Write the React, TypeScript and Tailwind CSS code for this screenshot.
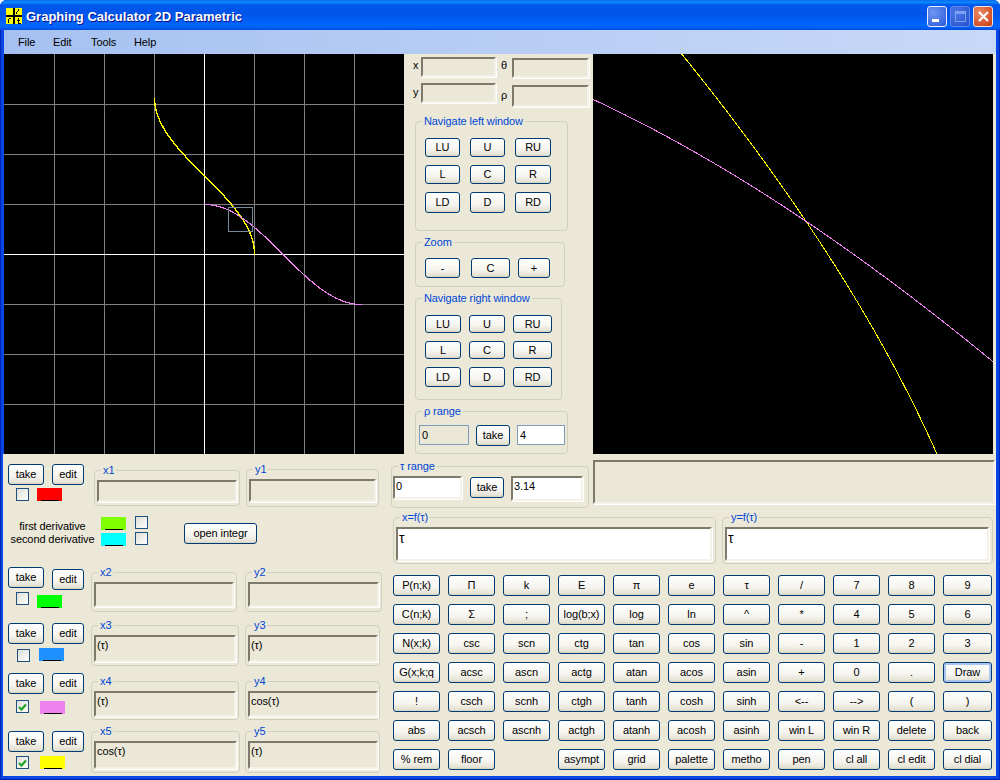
import React from 'react';

interface BoxProps {
  className?: string;
  children?: React.ReactNode;
}

interface GroupProps extends BoxProps {
  label: string;
}

interface SwatchProps {
  className: string;
}

const range = (from: number, to: number, n: number) =>
  Array.from({ length: n + 1 }, (_, i) => from + ((to - from) * i) / n);

// x = cos(t), y = t  and  x = t, y = cos(t), t from 0 to 3.14
const curve = (fx: (t: number) => number, fy: (t: number) => number, sx: number, ox: number, oy: number) =>
  range(0, 3.14, 1200)
    .map((t) => `${(ox + sx * fx(t)).toFixed(2)},${(oy - sx * fy(t)).toFixed(2)}`)
    .join(' ');

const Btn: React.FC<BoxProps> = ({ className = '', children }) => (
  <button className={`flex items-center justify-center rounded-[3px] border border-[#003c74] bg-[linear-gradient(180deg,#ffffff_0%,#f5f4ee_60%,#e6e3d6_90%,#d6d2c2_100%)] text-[11px] leading-[13px] text-black whitespace-nowrap overflow-hidden ${className}`}>
    {children}
  </button>
);

const Group: React.FC<GroupProps> = ({ label, className = '', children }) => (
  <fieldset className={`rounded-[4px] border border-[#d0d0bf] ${className}`}>
    <legend className="ml-[6px] h-[13px] px-[2px] text-[11px] leading-[13px] text-[#0046d5]">{label}</legend>
    {children}
  </fieldset>
);

const Sunken: React.FC<BoxProps> = ({ className = '', children }) => (
  <div className={`border-2 border-t-[#7d7a6c] border-l-[#7d7a6c] border-r-[#f4f2e8] border-b-[#f4f2e8] pl-[1px] pt-[2px] text-[11px] leading-[13px] text-black shadow-[1px_1px_0_#ffffff] ${className}`}>
    {children}
  </div>
);

const Check: React.FC<{ on?: boolean; className: string }> = ({ on, className }) => (
  <div className={`flex h-[13px] w-[13px] shrink-0 items-center justify-center border border-[#1c5180] bg-[linear-gradient(135deg,#dcdcd7,#ffffff)] ${className}`}>
    {on && (
      <svg width="9" height="8" viewBox="0 0 9 8">
        <path d="M1 4l2.5 2.5L8 1.5" fill="none" stroke="#21a121" strokeWidth="2.2" />
      </svg>
    )}
  </div>
);

const Swatch: React.FC<SwatchProps> = ({ className }) => (
  <div className={`flex h-[13px] w-[25px] shrink-0 items-end justify-center ${className}`}>
    <div className="h-[1px] w-[18px] bg-black" />
  </div>
);

const Controls: React.FC<{ take: string; edit: string; children: React.ReactNode }> = ({ take, edit, children }) => (
  <div className="w-[87px] shrink-0">
    <div className="flex items-start">
      <Btn className={`ml-[4px] h-[21px] w-[36px] ${take}`}>take</Btn>
      <Btn className={`ml-[8px] h-[21px] w-[32px] ${edit}`}>edit</Btn>
    </div>
    <div className="flex items-start">{children}</div>
  </div>
);

const NavGrid: React.FC<{ className: string }> = ({ className }) => (
  <div className={`ml-[9px] mt-[10px] grid gap-y-[8px] ${className}`}>
    {['LU', 'U', 'RU', 'L', 'C', 'R', 'LD', 'D', 'RD'].map((t) => (
      <Btn key={t}>{t}</Btn>
    ))}
  </div>
);

const keys = [
  'P(n;k)', 'Π', 'k', 'E', 'π', 'e', 'τ', '/', '7', '8', '9',
  'C(n;k)', 'Σ', ';', 'log(b;x)', 'log', 'ln', '^', '*', '4', '5', '6',
  'N(x;k)', 'csc', 'scn', 'ctg', 'tan', 'cos', 'sin', '-', '1', '2', '3',
  'G(x;k;q', 'acsc', 'ascn', 'actg', 'atan', 'acos', 'asin', '+', '0', '.', 'Draw',
  '!', 'csch', 'scnh', 'ctgh', 'tanh', 'cosh', 'sinh', '<--', '-->', '(', ')',
  'abs', 'acsch', 'ascnh', 'actgh', 'atanh', 'acosh', 'asinh', 'win L', 'win R', 'delete', 'back',
  '% rem', 'floor', '', 'asympt', 'grid', 'palette', 'metho', 'pen', 'cl all', 'cl edit', 'cl dial',
];

const LeftPlot = () => (
  <svg width="400" height="400" viewBox="0 0 400 400" className="block shrink-0 bg-black">
    {[50, 100, 150, 250, 300, 350].map((p) => (
      <g key={p} stroke="#808080" strokeWidth="1" shapeRendering="crispEdges">
        <line x1={p + 0.5} y1="0" x2={p + 0.5} y2="400" />
        <line x1="0" y1={p + 0.5} x2="400" y2={p + 0.5} />
      </g>
    ))}
    <g stroke="#ffffff" strokeWidth="1" shapeRendering="crispEdges">
      <line x1="200.5" y1="0" x2="200.5" y2="400" />
      <line x1="0" y1="200.5" x2="400" y2="200.5" />
    </g>
    <polyline points={curve(Math.cos, (t) => t, 50, 200.5, 200.5)} fill="none" stroke="#ffff00" strokeWidth="1.4" shapeRendering="crispEdges" />
    <polyline points={curve((t) => t, Math.cos, 50, 200.5, 200.5)} fill="none" stroke="#ee82ee" strokeWidth="1.2" shapeRendering="crispEdges" />
    <rect x="224.5" y="153.5" width="24" height="24" fill="none" stroke="#778899" strokeWidth="1" shapeRendering="crispEdges" />
  </svg>
);

const RightPlot = () => (
  <svg width="400" height="400" viewBox="0 0 400 400" className="block shrink-0 bg-black">
    <polyline points={curve(Math.cos, (t) => t, 833, -402.6, 783)} fill="none" stroke="#ffff00" strokeWidth="1" shapeRendering="crispEdges" />
    <polyline points={curve((t) => t, Math.cos, 833, -402.6, 783)} fill="none" stroke="#ee82ee" strokeWidth="1" shapeRendering="crispEdges" />
  </svg>
);

const Logo = () => (
  <svg width="16" height="16" viewBox="0 0 16 16" className="ml-[6px] mt-[8px] shrink-0" shapeRendering="crispEdges">
    <rect width="16" height="16" fill="#ffff00" />
    <rect x="7" width="2" height="16" fill="#000000" />
    <rect y="7" width="16" height="2" fill="#000000" />
    <path d="M12 1h1v2h-1v1h-1v2h-1V4h1V3h1zM2 11h1v4H2zM3 10h2v1H3zM12 10h1v2h1v1h-1v2h2v1h-3v-3h-1v-1h1z" fill="#000000" />
  </svg>
);

const WinButtons = () => (
  <div className="ml-auto mr-[7px] mt-[6px] flex gap-[3px]">
    <div className="flex h-[21px] w-[20px] items-end rounded-[3px] border border-[#e8eefc] bg-[radial-gradient(circle_at_30%_30%,#6f96f0,#2a58dc)] pb-[4px] pl-[4px]">
      <div className="h-[3px] w-[7px] bg-white" />
    </div>
    <div className="flex h-[21px] w-[20px] items-center justify-center rounded-[3px] border border-[#5f86ea] bg-[radial-gradient(circle_at_30%_30%,#4c78e8,#2450cc)]">
      <div className="h-[11px] w-[11px] border border-[#7c9ff0] border-t-[3px]" />
    </div>
    <div className="flex h-[21px] w-[20px] items-center justify-center rounded-[3px] border border-[#f0e4dc] bg-[radial-gradient(circle_at_30%_30%,#ec8a64,#c93a12)]">
      <svg width="13" height="13" viewBox="0 0 13 13">
        <path d="M2 2l9 9M11 2l-9 9" stroke="#ffffff" strokeWidth="2.2" />
      </svg>
    </div>
  </div>
);

export default function App() {
  return (
    <div className="flex h-[780px] w-[1000px] flex-col overflow-hidden rounded-t-[7px] bg-[#0a46e6] tracking-[-0.1px] text-black shadow-[inset_1px_0_#0027b8,inset_-1px_0_#0027b8,inset_0_-1px_#001ea0] [font-family:'Liberation_Sans',sans-serif]">
      {/* title bar */}
      <div className="flex h-[30px] shrink-0 items-start bg-[linear-gradient(180deg,#0a6af0_0%,#0b8afc_8%,#0058ee_16%,#0054e8_45%,#0066ff_85%,#0060f8_92%,#0048dc_100%)]">
        <Logo />
        <div className="ml-[4px] mt-[9px] text-[13px] font-bold leading-[16px] tracking-normal text-white [text-shadow:1px_1px_#0f1089]">
          Graphing Calculator 2D Parametric
        </div>
        <WinButtons />
      </div>

      <div className="mx-[4px] mb-[4px] flex min-h-0 flex-1 flex-col bg-[#ebe8d8]">
        {/* menu */}
        <div className="flex h-[24px] shrink-0 items-center bg-[linear-gradient(90deg,#a6c1f1,#c8d9f7)] pl-[14px] text-[11px]">
          <div className="w-[35px]">File</div>
          <div className="w-[38px]">Edit</div>
          <div className="w-[43px]">Tools</div>
          <div>Help</div>
        </div>

        {/* plots and navigation */}
        <div className="flex h-[400px] shrink-0">
          <LeftPlot />
          <div className="w-[189px] shrink-0 text-[11px]">
            <div className="flex items-start pl-[9px] pt-[3px]">
              <div className="mt-[2px] w-[8px] leading-[13px]">x</div>
              <Sunken className="h-[20px] w-[75px]" />
              <div className="mt-[2px] w-[16px] pl-[5px] leading-[13px]">θ</div>
              <Sunken className="mt-[1px] h-[20px] w-[77px]" />
            </div>
            <div className="mt-[5px] flex items-start pl-[9px]">
              <div className="mt-[3px] w-[8px] leading-[13px]">y</div>
              <Sunken className="h-[20px] w-[75px]" />
              <div className="mt-[6px] w-[16px] pl-[5px] leading-[13px]">ρ</div>
              <Sunken className="mt-[2px] h-[22px] w-[77px]" />
            </div>

            <Group label="Navigate left window" className="ml-[11px] mt-[8px] h-[116px] w-[153px]">
              <NavGrid className="grid-cols-[35px_35px_36px] grid-rows-[19px_19px_21px] gap-x-[10px]" />
            </Group>

            <Group label="Zoom" className="ml-[11px] mt-[5px] h-[51px] w-[150px]">
              <div className="ml-[9px] mt-[9px] flex">
                <Btn className="h-[20px] w-[35px]">-</Btn>
                <Btn className="ml-[11px] h-[20px] w-[39px]">C</Btn>
                <Btn className="ml-[8px] h-[20px] w-[32px]">+</Btn>
              </div>
            </Group>

            <Group label="Navigate right window" className="ml-[11px] mt-[5px] h-[108px] w-[147px]">
              <NavGrid className="grid-cols-[36px_36px_39px] grid-rows-[18px_18px_20px] gap-x-[8px]" />
            </Group>

            <Group label="ρ range" className="ml-[11px] mt-[5px] h-[49px] w-[153px]">
              <div className="ml-[3px] mt-[7px] flex items-start">
                <div className="h-[20px] w-[50px] border border-[#7f9db9] pl-[2px] leading-[18px]">0</div>
                <Btn className="ml-[7px] h-[21px] w-[34px]">take</Btn>
                <div className="ml-[7px] h-[20px] w-[48px] border border-[#7f9db9] bg-white pl-[2px] leading-[18px]">4</div>
              </div>
            </Group>
          </div>
          <RightPlot />
        </div>

        {/* lower half */}
        <div className="-ml-[1px] flex min-h-0 flex-1 bg-[#ebe8d8] pl-[1px] text-[11px]">
          <div className="w-[387px] shrink-0 pt-[9px]">
            <div className="flex h-[50px] items-start">
              <Controls take="mt-[1px]" edit="mt-[1px]">
                <Check className="ml-[12px] mt-[3px]" />
                <Swatch className="ml-[8px] mt-[3px] bg-[#ff0000]" />
              </Controls>
              <Group label="x1" className="ml-[3px] mt-[1px] h-[42px] w-[146px]">
                <Sunken className="ml-[2px] mt-[3px] h-[22px] w-[140px]" />
              </Group>
              <Group label="y1" className="ml-[6px] h-[44px] w-[133px]">
                <Sunken className="ml-[2px] mt-[3px] h-[23px] w-[127px]" />
              </Group>
            </div>

            <div className="flex h-[53px] items-start">
              <div className="mt-[7px] w-[97px] shrink-0 text-center leading-[13px]">
                <div>first derivative</div>
                <div>second derivative</div>
              </div>
              <div className="mt-[4px] flex flex-col gap-[3px]">
                <Swatch className="bg-[#7fff00]" />
                <Swatch className="bg-[#00ffff]" />
              </div>
              <div className="ml-[9px] mt-[3px] flex flex-col gap-[3px]">
                <Check className="" />
                <Check className="" />
              </div>
              <Btn className="ml-[36px] mt-[10px] h-[21px] w-[73px]">open integr</Btn>
            </div>

            <div className="flex h-[53px] items-start">
              <Controls take="mt-[1px]" edit="mt-[3px]">
                <Check className="ml-[12px] mt-[2px]" />
                <Swatch className="ml-[8px] mt-[5px] bg-[#00ff00]" />
              </Controls>
              <Group label="x2" className="h-[46px] w-[146px]">
                <Sunken className="ml-[2px] mt-[3px] h-[25px] w-[140px]" />
              </Group>
              <Group label="y2" className="ml-[8px] h-[46px] w-[137px]">
                <Sunken className="ml-[2px] mt-[3px] h-[25px] w-[131px]" />
              </Group>
            </div>

            <div className="flex h-[54px] items-start">
              <Controls take="mt-[4px]" edit="mt-[4px]">
                <Check className="ml-[13px] mt-[5px]" />
                <Swatch className="ml-[9px] mt-[4px] bg-[#1e90ff]" />
              </Controls>
              <Group label="x3" className="h-[47px] w-[148px]">
                <Sunken className="ml-[2px] mt-[3px] h-[27px] w-[142px]">(τ)</Sunken>
              </Group>
              <Group label="y3" className="ml-[6px] h-[47px] w-[135px]">
                <Sunken className="ml-[2px] mt-[3px] h-[27px] w-[130px]">(τ)</Sunken>
              </Group>
            </div>

            <div className="flex h-[52px] items-start">
              <Controls take="" edit="">
                <Check on className="ml-[12px] mt-[6px]" />
                <Swatch className="ml-[11px] mt-[7px] bg-[#ee82ee]" />
              </Controls>
              <Group label="x4" className="mt-[2px] h-[45px] w-[148px]">
                <Sunken className="ml-[2px] mt-[3px] h-[26px] w-[142px]">(τ)</Sunken>
              </Group>
              <Group label="y4" className="ml-[6px] mt-[2px] h-[45px] w-[135px]">
                <Sunken className="ml-[2px] mt-[3px] h-[26px] w-[130px]">cos(τ)</Sunken>
              </Group>
            </div>

            <div className="flex items-start">
              <Controls take="mt-[6px]" edit="mt-[6px]">
                <Check on className="ml-[12px] mt-[4px]" />
                <Swatch className="ml-[11px] mt-[4px] bg-[#ffff00]" />
              </Controls>
              <Group label="x5" className="h-[48px] w-[149px]">
                <Sunken className="ml-[2px] mt-[3px] h-[28px] w-[143px]">cos(τ)</Sunken>
              </Group>
              <Group label="y5" className="ml-[5px] h-[48px] w-[135px]">
                <Sunken className="ml-[2px] mt-[3px] h-[28px] w-[130px]">(τ)</Sunken>
              </Group>
            </div>
          </div>

          <div className="min-w-0 flex-1">
            <div className="flex h-[57px] items-start pt-[6px]">
              <Group label="τ range" className="h-[48px] w-[198px] shrink-0">
                <div className="ml-[1px] mt-[3px] flex items-start">
                  <Sunken className="h-[23px] w-[69px] bg-white">0</Sunken>
                  <Btn className="ml-[8px] mt-[1px] h-[21px] w-[34px]">take</Btn>
                  <Sunken className="ml-[7px] h-[25px] w-[72px] bg-white">3.14</Sunken>
                </div>
              </Group>
              <Sunken className="ml-[4px] h-[44px] w-[402px] shrink-0" />
            </div>

            <div className="flex pl-[2px]">
              <Group label="x=f(τ)" className="h-[53px] w-[323px] shrink-0">
                <Sunken className="ml-[2px] mt-[3px] h-[34px] w-[316px] bg-white text-[14px] leading-[14px]">τ</Sunken>
              </Group>
              <Group label="y=f(τ)" className="ml-[6px] h-[53px] w-[271px] shrink-0">
                <Sunken className="ml-[2px] mt-[3px] h-[34px] w-[264px] bg-white text-[14px] leading-[14px]">τ</Sunken>
              </Group>
            </div>

            <div className="ml-[2px] mt-[11px] grid grid-cols-[repeat(10,47px)_49px] auto-rows-[21px] gap-x-[8px] gap-y-[8px]">
              {keys.map((k, i) =>
                k === '' ? (
                  <div key={i} />
                ) : (
                  <Btn key={i} className={k === 'Draw' ? 'shadow-[inset_0_0_0_2px_#a9c4f0]' : ''}>
                    {k}
                  </Btn>
                ),
              )}
            </div>
          </div>
        </div>
      </div>
    </div>
  );
}
